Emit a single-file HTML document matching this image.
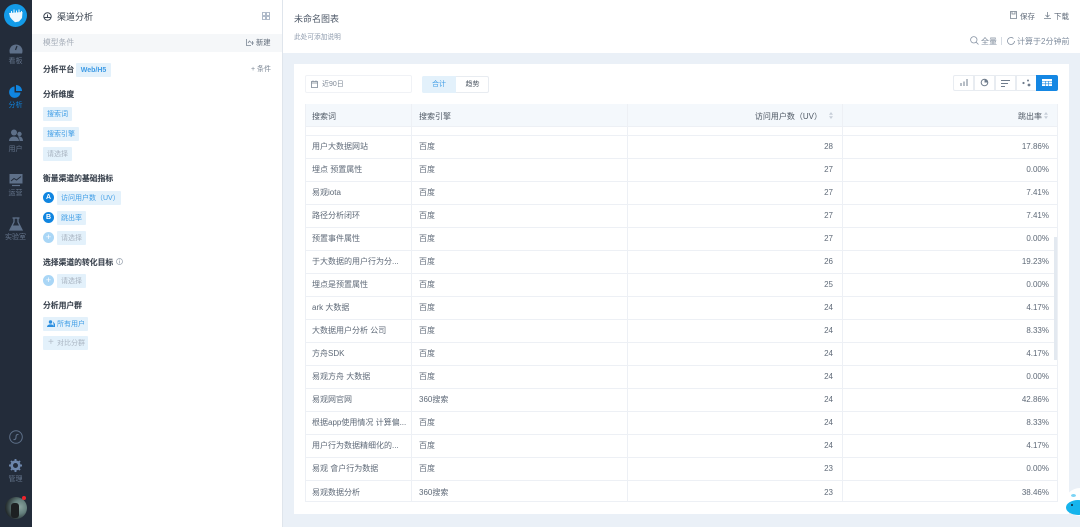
<!DOCTYPE html>
<html lang="zh"><head><meta charset="utf-8"><title>渠道分析</title>
<style>
*{box-sizing:border-box}
html,body{margin:0;padding:0;width:1080px;height:527px;overflow:hidden;background:#fff;font-family:"Liberation Sans","Noto Sans CJK SC",sans-serif}
#wrap{position:absolute;left:0;top:0;width:1080px;height:527px;overflow:hidden;filter:blur(.35px)}
.a{position:absolute;white-space:nowrap}
#side{position:absolute;left:0;top:0;width:32px;height:527px;background:#232c3a}
.nl{position:absolute;left:0;width:31px;margin-top:1px;text-align:center;font-size:7px;line-height:9px;color:#64748b;white-space:nowrap}
#panel{position:absolute;left:32px;top:0;width:251px;height:527px;background:#fff;border-right:1px solid #dfe5ec}
.h{position:absolute;left:43px;margin-top:1px;font-size:7.800px;line-height:12px;color:#333c48;font-weight:500;white-space:nowrap;-webkit-text-stroke:.2px #333c48}
.tag{position:absolute;height:14px;line-height:15px;font-size:7px;background:#e3f1fb;color:#3f9de6;padding:0 4px;border-radius:1px;white-space:nowrap}
.tag.g{color:#a9b4c1}
.dot{position:absolute;left:43px;width:11px;height:11px;border-radius:50%;background:#0f85e0;color:#fff;font-size:7px;line-height:11px;text-align:center;font-weight:bold}
.dot.l{background:#a9d6f6;font-weight:normal;font-size:9px}
#main{position:absolute;left:283px;top:53px;width:797px;height:474px;background:#eaf0f7}
#card{position:absolute;left:294px;top:64px;width:775px;height:450px;background:#fff}
.th,.td{position:absolute;margin-top:1px;font-size:8px;line-height:12px;color:#5f6a78;white-space:nowrap}
.th{color:#4f5965}
.ln{position:absolute;left:305px;width:753px;height:1px;background:#edf0f5}
.vl{position:absolute;top:104px;width:1px;height:397px;background:#edf0f5}
.b{position:absolute;top:75px;width:21px;height:16px;background:#fff;border:1px solid #e8ecf1}
</style></head><body><div id="wrap">
<div id="side">
<div class="a" style="left:4px;top:4px;width:23px;height:23px;border-radius:50%;background:#139be8"></div>
<svg class="a" style="left:4px;top:4px" width="23" height="23" viewBox="0 0 23 23"><path d="M5 9 18.500 8l-.5 6-3 3.500-4 .8-3-2.800-2-2.500z" fill="#eef8fe"/><path d="M7.500 9V7M10 9V5.500M12.500 9V6.500M15 9V5.500M17.500 9V7" stroke="#eef8fe" stroke-width="1"/></svg>
<svg class="a" style="left:9px;top:42px" width="14" height="13" viewBox="0 0 14 13"><path d="M1 11.500A6.500 6.500 0 1 1 13 11.500Z" fill="#5e7089"/><path d="M8 4 6.500 8" stroke="#232c3a" stroke-width="1.200"/></svg>
<div class="nl" style="top:56px">看板</div>
<svg class="a" style="left:9px;top:85px" width="13" height="13" viewBox="0 0 13 13"><path d="M5.500 1.500A5.700 5.700 0 1 0 11.500 7.500H5.500Z" fill="#0f85e0"/><path d="M7 0A6 6 0 0 1 13 6H7Z" fill="#0f85e0"/></svg>
<div class="nl" style="top:100px;color:#0f85e0">分析</div>
<svg class="a" style="left:9px;top:129px" width="14" height="13" viewBox="0 0 14 13"><circle cx="5" cy="3.500" r="3" fill="#5e7089"/><circle cx="10.500" cy="5" r="2.200" fill="#5e7089"/><path d="M0 12c0-6 10-6 10 0ZM10.500 12c0-2-.5-3.500-1.500-4.500 3-.8 5 1.500 5 4.500Z" fill="#5e7089"/></svg>
<div class="nl" style="top:144px">用户</div>
<svg class="a" style="left:9px;top:174px" width="14" height="13" viewBox="0 0 14 13"><rect x="0.500" width="13" height="9.500" fill="#5e7089"/><path d="M2 7 5 4.500 7.500 6 12 2.500" stroke="#232c3a" fill="none"/><path d="M3 11.500h8" stroke="#5e7089" stroke-width="1.200"/></svg>
<div class="nl" style="top:188px">运营</div>
<svg class="a" style="left:9px;top:217px" width="14" height="14" viewBox="0 0 14 14"><path d="M5 1V5L1 13H13L9 5V1" fill="none" stroke="#5e7089" stroke-width="1.300"/><path d="M3.500 8.500H10.500L12.500 13.500H1.500Z" fill="#5e7089"/><path d="M3.500 1H10.500" stroke="#5e7089" stroke-width="1.300"/></svg>
<div class="nl" style="top:232px">实验室</div>
<svg class="a" style="left:9px;top:430px" width="14" height="14" viewBox="0 0 14 14"><circle cx="7" cy="7" r="6.300" fill="none" stroke="#5e7089"/><path d="M4.500 9.500c2 .5 2.500-1 2.500-2.500s.5-3 2.500-2.500" fill="none" stroke="#5e7089" stroke-width="1.100"/></svg>
<svg class="a" style="left:9px;top:459px" width="13" height="13" viewBox="0 0 13 13"><circle cx="6.500" cy="6.500" r="3.800" fill="none" stroke="#6d86ab" stroke-width="2.600"/><path d="M6.500 0v2.500M6.500 10.500V13M0 6.500h2.500M10.500 6.500H13M2 2l1.700 1.700M9.300 9.300 11 11M2 11l1.700-1.700M9.300 3.700 11 2" stroke="#6d86ab" stroke-width="1.900"/></svg>
<div class="nl" style="top:474px">管理</div>
<div class="a" style="left:5px;top:497px;width:22px;height:22px;border-radius:50%;background:radial-gradient(circle at 68% 45%,#8aa39f 0,#65807e 35%,#232a2c 75%)"></div>
<div class="a" style="left:11px;top:503px;width:8px;height:15px;border-radius:3px;background:#1d2022"></div>
<div class="a" style="left:22px;top:496px;width:4px;height:4px;border-radius:50%;background:#f0242c"></div>
</div>

<div id="panel"></div>
<div class="a" style="left:32px;top:34px;width:250px;height:18px;background:#f5f7f9"></div>
<svg class="a" style="left:43px;top:12px" width="9" height="9" viewBox="0 0 9 9"><circle cx="4.500" cy="4.500" r="3.700" fill="none" stroke="#3d4653" stroke-width="1"/><path d="M1 5.500H8M4.500 2.500V5" stroke="#3d4653"/></svg>
<div class="a" style="left:57px;top:10px;font-size:9px;line-height:14px;color:#333c48">渠道分析</div>
<svg class="a" style="left:262px;top:12px" width="8" height="8" viewBox="0 0 8 8"><path d="M.5.500h3v3h-3zM4.500.500h3v3h-3zM.5 4.500h3v3h-3zM4.500 4.500h3v3h-3z" fill="none" stroke="#9aa8bb" stroke-width=".8"/></svg>
<div class="a" style="left:43px;top:37px;font-size:7.800px;line-height:12px;color:#a3abb6">模型条件</div>
<svg class="a" style="left:246px;top:39px" width="8" height="7" viewBox="0 0 8 7"><path d="M.5 0v6.500H5M2 4l1.500-2L5 3.500M6.500 2v4M5 4h3" fill="none" stroke="#7b8694" stroke-width=".8"/></svg>
<div class="a" style="left:256px;top:37px;font-size:7.300px;line-height:12px;color:#5f6a78">新建</div>
<div class="h" style="top:63px">分析平台</div>
<div class="tag" style="left:76px;top:63px;width:35px;padding:0;text-align:center;font-weight:bold;color:#3d9be6;font-size:7px">Web/H5</div>
<div class="a" style="left:251px;top:64px;font-size:7px;line-height:12px;color:#7b8694">+ 条件</div>
<div class="h" style="top:88px">分析维度</div>
<div class="tag" style="left:43px;top:107px">搜索词</div>
<div class="tag" style="left:43px;top:127px">搜索引擎</div>
<div class="tag g" style="left:43px;top:147px">请选择</div>
<div class="h" style="top:172px">衡量渠道的基础指标</div>
<div class="dot" style="top:192px">A</div>
<div class="tag" style="left:57px;top:191px;width:64px">访问用户数（UV）</div>
<div class="dot" style="top:212px">B</div>
<div class="tag" style="left:57px;top:211px">跳出率</div>
<div class="dot l" style="top:232px">+</div>
<div class="tag g" style="left:57px;top:231px">请选择</div>
<div class="h" style="top:256px">选择渠道的转化目标</div>
<svg class="a" style="left:116px;top:258px" width="7" height="7" viewBox="0 0 7 7"><circle cx="3.500" cy="3.500" r="3" fill="none" stroke="#98a2ae" stroke-width=".7"/><path d="M3.500 3v2.500M3.500 1.500v1" stroke="#98a2ae" stroke-width=".7"/></svg>
<div class="dot l" style="top:275px">+</div>
<div class="tag g" style="left:57px;top:274px">请选择</div>
<div class="h" style="top:299px">分析用户群</div>
<div class="tag" style="left:43px;top:317px;width:45px;padding-left:14px">所有用户</div>
<svg class="a" style="left:47px;top:320px" width="8" height="7" viewBox="0 0 8 7"><circle cx="3.500" cy="2" r="1.700" fill="#2b8fe0"/><path d="M0 7c0-3.500 7-3.500 7 0Z" fill="#2b8fe0"/><path d="M6 1.500 8 4v3H7" fill="#2b8fe0"/></svg>
<div class="tag g" style="left:43px;top:336px;width:45px;padding-left:14px">对比分群</div>
<div class="a" style="left:48px;top:336px;font-size:10px;line-height:13px;color:#b3bdc9">+</div>

<div class="a" style="left:294px;top:12px;font-size:9px;line-height:15px;color:#4f5a69">未命名图表</div>
<div class="a" style="left:294px;top:32px;font-size:6.700px;line-height:12px;color:#8e9bad">此处可添加说明</div>
<svg class="a" style="left:1010px;top:11px" width="7" height="8" viewBox="0 0 7 8"><path d="M.5.500h6v7h-6zM2 .5v2.500h3V.5" fill="none" stroke="#77828f" stroke-width=".8"/></svg>
<div class="a" style="left:1020px;top:11px;font-size:7.500px;line-height:11px;color:#5f6a78">保存</div>
<svg class="a" style="left:1044px;top:12px" width="7" height="7" viewBox="0 0 7 7"><path d="M3.500 0v4.500M1.500 3l2 2 2-2M0 6.500h7" fill="none" stroke="#77828f" stroke-width=".8"/></svg>
<div class="a" style="left:1054px;top:11px;font-size:7.500px;line-height:11px;color:#5f6a78">下载</div>
<svg class="a" style="left:970px;top:36px" width="9" height="9" viewBox="0 0 9 9"><circle cx="3.800" cy="3.800" r="3.200" fill="none" stroke="#8995a5" stroke-width=".8"/><path d="M6.200 6.200 8.500 8.500" stroke="#8995a5" stroke-width=".8"/></svg>
<div class="a" style="left:981px;top:36px;font-size:8px;line-height:11px;color:#7e8b9c">全量</div>
<div class="a" style="left:1001px;top:37px;width:1px;height:8px;background:#d5dbe3"></div>
<svg class="a" style="left:1007px;top:37px" width="8" height="8" viewBox="0 0 8 8"><path d="M6.500 1.500A3.500 3.500 0 1 0 7.500 4" fill="none" stroke="#8995a5" stroke-width=".8"/></svg>
<div class="a" style="left:1017px;top:36px;font-size:8px;line-height:11px;color:#7e8b9c">计算于2分钟前</div>

<div id="main"></div>
<div id="card"></div>

<div class="a" style="left:305px;top:75px;width:107px;height:18px;border:1px solid #f0f2f6;border-radius:2px"></div>
<svg class="a" style="left:311px;top:80px" width="7" height="8" viewBox="0 0 7 8"><path d="M.5 1.500h6v6h-6zM.5 3h6M2 .5v1M5 .5v1" fill="none" stroke="#7b8694" stroke-width=".8"/></svg>
<div class="a" style="left:322px;top:79px;font-size:7px;line-height:12px;color:#7e8896">近90日</div>
<div class="a" style="left:422px;top:76px;width:67px;height:17px;border:1px solid #e8ecf1;border-radius:2px;background:#fff"></div>
<div class="a" style="left:422px;top:76px;width:34px;height:17px;background:#e3f1fb;border-radius:2px 0 0 2px;text-align:center;font-size:7px;line-height:18px;color:#3f9de6">合计</div>
<div class="a" style="left:456px;top:76px;width:33px;height:17px;text-align:center;font-size:7px;line-height:18px;color:#4f5965">趋势</div>

<div class="b" style="left:953px;border-radius:2px 0 0 2px"></div>
<div class="b" style="left:974px"></div><div class="b" style="left:995px"></div><div class="b" style="left:1016px"></div>
<div class="b" style="left:1036px;width:22px;background:#1587e3;border-color:#1587e3;border-radius:0 2px 2px 0"></div>
<svg class="a" style="left:960px;top:79px" width="8" height="7" viewBox="0 0 8 7"><path d="M1 7V4M4 7V2.500M7 7V0" stroke="#6f7c8c" stroke-width="1"/></svg>
<svg class="a" style="left:980px;top:78px" width="9" height="9" viewBox="0 0 9 9"><circle cx="4.500" cy="4.500" r="3.300" fill="none" stroke="#6f7c8c"/><path d="M4.500 4.500V1A3.500 3.500 0 0 1 8 4.500Z" fill="#6f7c8c"/></svg>
<svg class="a" style="left:1001px;top:80px" width="9" height="7" viewBox="0 0 9 7"><path d="M0 .5h9M0 3.500h7M0 6.500h4" stroke="#6f7c8c"/></svg>
<svg class="a" style="left:1022px;top:79px" width="9" height="8" viewBox="0 0 9 8"><circle cx="1.500" cy="4" r="1.100" fill="#6f7c8c"/><circle cx="6" cy="1.500" r="1" fill="#6f7c8c"/><circle cx="7" cy="6" r="1.400" fill="#6f7c8c"/></svg>
<svg class="a" style="left:1042px;top:79px" width="10" height="7" viewBox="0 0 10 7"><path d="M0 0h10v7H0z" fill="#fff"/><path d="M0 2.500h10M0 4.800h10M3.300 2v5M6.700 2v5" stroke="#1587e3" stroke-width=".6"/></svg>

<div class="a" style="left:305px;top:104px;width:753px;height:23px;background:#f4f8fc"></div>
<div class="ln" style="top:126px"></div><div class="ln" style="top:135px"></div>
<div class="ln" style="top:158px"></div><div class="ln" style="top:181px"></div><div class="ln" style="top:204px"></div><div class="ln" style="top:227px"></div><div class="ln" style="top:250px"></div><div class="ln" style="top:273px"></div><div class="ln" style="top:296px"></div><div class="ln" style="top:319px"></div><div class="ln" style="top:342px"></div><div class="ln" style="top:365px"></div><div class="ln" style="top:388px"></div><div class="ln" style="top:411px"></div><div class="ln" style="top:434px"></div><div class="ln" style="top:457px"></div><div class="ln" style="top:480px"></div><div class="ln" style="top:501px"></div>
<div class="vl" style="left:305px"></div><div class="vl" style="left:411px"></div><div class="vl" style="left:627px"></div><div class="vl" style="left:842px"></div><div class="vl" style="left:1057px"></div>
<div class="a" style="left:1054px;top:237px;width:3px;height:123px;background:#e3e9f0"></div>

<div class="th" style="left:312px;top:110px">搜索词</div>
<div class="th" style="left:419px;top:110px">搜索引擎</div>
<div class="th" style="right:258px;top:110px">访问用户数（UV）</div>
<div class="th" style="right:38px;top:110px">跳出率</div>
<svg class="a" style="left:829px;top:112px" width="4" height="7" viewBox="0 0 4 7"><path d="M2 0 4 2.700H0ZM2 7 4 4.300H0Z" fill="#c6ced8"/></svg>
<svg class="a" style="left:1044px;top:112px" width="4" height="7" viewBox="0 0 4 7"><path d="M2 0 4 2.700H0ZM2 7 4 4.300H0Z" fill="#c6ced8"/></svg>

<div class="td" style="left:312px;top:140px">用户大数据网站</div><div class="td" style="left:419px;top:140px">百度</div><div class="td" style="right:247px;top:140px">28</div><div class="td" style="right:31px;top:140px">17.86%</div>
<div class="td" style="left:312px;top:163px">埋点 预置属性</div><div class="td" style="left:419px;top:163px">百度</div><div class="td" style="right:247px;top:163px">27</div><div class="td" style="right:31px;top:163px">0.00%</div>
<div class="td" style="left:312px;top:186px">易观iota</div><div class="td" style="left:419px;top:186px">百度</div><div class="td" style="right:247px;top:186px">27</div><div class="td" style="right:31px;top:186px">7.41%</div>
<div class="td" style="left:312px;top:209px">路径分析闭环</div><div class="td" style="left:419px;top:209px">百度</div><div class="td" style="right:247px;top:209px">27</div><div class="td" style="right:31px;top:209px">7.41%</div>
<div class="td" style="left:312px;top:232px">预置事件属性</div><div class="td" style="left:419px;top:232px">百度</div><div class="td" style="right:247px;top:232px">27</div><div class="td" style="right:31px;top:232px">0.00%</div>
<div class="td" style="left:312px;top:255px">于大数据的用户行为分...</div><div class="td" style="left:419px;top:255px">百度</div><div class="td" style="right:247px;top:255px">26</div><div class="td" style="right:31px;top:255px">19.23%</div>
<div class="td" style="left:312px;top:278px">埋点是预置属性</div><div class="td" style="left:419px;top:278px">百度</div><div class="td" style="right:247px;top:278px">25</div><div class="td" style="right:31px;top:278px">0.00%</div>
<div class="td" style="left:312px;top:301px">ark 大数据</div><div class="td" style="left:419px;top:301px">百度</div><div class="td" style="right:247px;top:301px">24</div><div class="td" style="right:31px;top:301px">4.17%</div>
<div class="td" style="left:312px;top:324px">大数据用户分析 公司</div><div class="td" style="left:419px;top:324px">百度</div><div class="td" style="right:247px;top:324px">24</div><div class="td" style="right:31px;top:324px">8.33%</div>
<div class="td" style="left:312px;top:347px">方舟SDK</div><div class="td" style="left:419px;top:347px">百度</div><div class="td" style="right:247px;top:347px">24</div><div class="td" style="right:31px;top:347px">4.17%</div>
<div class="td" style="left:312px;top:370px">易观方舟 大数据</div><div class="td" style="left:419px;top:370px">百度</div><div class="td" style="right:247px;top:370px">24</div><div class="td" style="right:31px;top:370px">0.00%</div>
<div class="td" style="left:312px;top:393px">易观网官网</div><div class="td" style="left:419px;top:393px">360搜索</div><div class="td" style="right:247px;top:393px">24</div><div class="td" style="right:31px;top:393px">42.86%</div>
<div class="td" style="left:312px;top:416px">根据app使用情况 计算偏...</div><div class="td" style="left:419px;top:416px">百度</div><div class="td" style="right:247px;top:416px">24</div><div class="td" style="right:31px;top:416px">8.33%</div>
<div class="td" style="left:312px;top:439px">用户行为数据精细化的...</div><div class="td" style="left:419px;top:439px">百度</div><div class="td" style="right:247px;top:439px">24</div><div class="td" style="right:31px;top:439px">4.17%</div>
<div class="td" style="left:312px;top:462px">易观 會户行为数据</div><div class="td" style="left:419px;top:462px">百度</div><div class="td" style="right:247px;top:462px">23</div><div class="td" style="right:31px;top:462px">0.00%</div>
<div class="td" style="left:312px;top:486px">易观数据分析</div><div class="td" style="left:419px;top:486px">360搜索</div><div class="td" style="right:247px;top:486px">23</div><div class="td" style="right:31px;top:486px">38.46%</div>

<div class="a" style="left:1065px;top:488px;width:30px;height:28px;border-radius:50%;background:#fff"></div>
<div class="a" style="left:1066px;top:500px;width:24px;height:15px;border-radius:50%;background:#16b4ec"></div>
<div class="a" style="left:1071px;top:494px;width:5px;height:3px;border-radius:50%;background:#7dd4f5"></div>
<div class="a" style="left:1071px;top:504px;width:2px;height:2px;border-radius:50%;background:#123"></div>
</div></body></html>
